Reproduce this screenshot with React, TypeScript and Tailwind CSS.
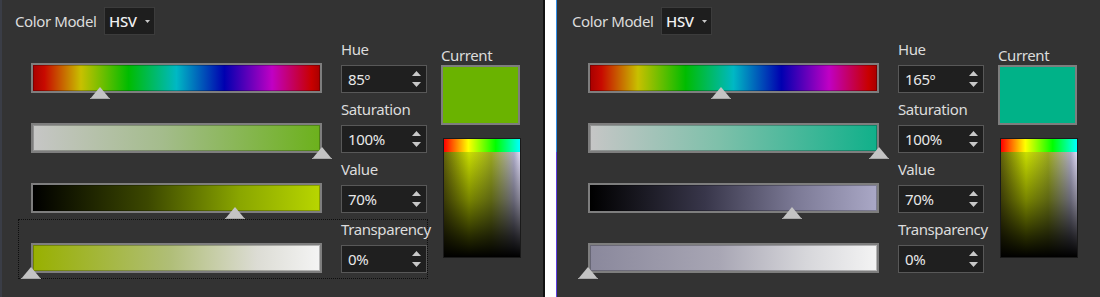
import React from 'react';

type PanelProps = {
  hue: number;
  sat: number;
  val: number;
  trans: number;
  swatch: string;
  satBar: string;
  valBar: string;
  transBar: string;
  edge: string;
  focused?: boolean;
};

const hueBar =
  'bg-[linear-gradient(to_right,#a80000,#c80a00_4%,#c8c000_16.7%,#00bc00_33.3%,#00b8c4_50%,#0000b0_66.7%,#c000c4_83.3%,#c80000_97%,#a80000)]';

const Thumb = ({ pct }: { pct: number }) => (
  <svg
    className="absolute top-[24px] -ml-[10px]"
    style={{ left: `${pct}%` }}
    width="20"
    height="12"
    viewBox="0 0 20 12"
  >
    <polygon points="10,0 20,12 0,12" fill="#c4c4c4" />
    <line x1="0" y1="11.5" x2="20" y2="11.5" stroke="#a8a8a8" strokeWidth="1" />
  </svg>
);

const Bar = ({ fill, pct }: { fill: string; pct: number }) => (
  <div className="relative w-[291px] h-[30px]">
    <div className={`h-full w-full border-2 border-[#7e7e7e] shadow-[inset_0_0_0_1px_rgba(0,0,0,0.25)] ${fill}`} />
    <Thumb pct={pct} />
  </div>
);

const Spin = ({ value }: { value: string }) => (
  <div className="mt-[5px] h-[28px] w-[86px] bg-[#1f1f1f] border border-[#585858] flex items-center justify-between pl-[6px] pr-[5px]">
    <span className="text-[15px] tracking-[-0.3px] text-[#e8e8e8]">{value}</span>
    <div className="flex flex-col gap-[6px]">
      <svg width="9" height="5" viewBox="0 0 9 5">
        <polygon points="4.5,0 9,5 0,5" fill="#c8c8c8" />
      </svg>
      <svg width="9" height="5" viewBox="0 0 9 5">
        <polygon points="0,0 9,0 4.5,5" fill="#c8c8c8" />
      </svg>
    </div>
  </div>
);

const Row = ({
  label,
  value,
  fill,
  pct,
  focused,
}: {
  label: string;
  value: string;
  fill: string;
  pct: number;
  focused?: boolean;
}) => (
  <div
    className={`flex h-[60px] pl-[12px] border ${
      focused ? 'border-dotted border-[#0e0e0e]' : 'border-transparent'
    }`}
  >
    <div className="pt-[23px]">
      <Bar fill={fill} pct={pct} />
    </div>
    <div className="ml-[19px] flex flex-col w-[86px]">
      <div className="h-[20px] leading-[18px] text-[15px] tracking-[-0.4px] text-[#dcdcdc] whitespace-nowrap">
        {label}
      </div>
      <Spin value={value} />
    </div>
  </div>
);

const Panel = (p: PanelProps) => (
  <div className={`h-[297px] w-[543px] shrink-0 bg-[#333333] border-l-2 ${p.edge} pt-[7px] flex flex-col`}>
    <div className="flex items-center h-[28px] pl-[13px]">
      <span className="w-[89px] text-[15px] tracking-[-0.4px] text-[#dcdcdc]">Color Model</span>
      <div className="h-[28px] w-[51px] bg-[#1e1e1e] border border-[#3c3c3c] flex items-center pl-[4px] gap-[8px]">
        <span className="text-[15px] tracking-[-0.3px] font-medium text-[#f0f0f0]">HSV</span>
        <svg width="5" height="3" viewBox="0 0 5 3">
          <polygon points="0,0 5,0 2.5,3" fill="#c8c8c8" />
        </svg>
      </div>
    </div>
    <div className="flex mt-[4px] pl-[16px]">
      <div className="flex flex-col w-[410px]">
        <Row label="Hue" value={`${p.hue}º`} fill={hueBar} pct={(p.hue / 360) * 100} />
        <Row label="Saturation" value={`${p.sat}%`} fill={p.satBar} pct={p.sat} />
        <Row label="Value" value={`${p.val}%`} fill={p.valBar} pct={p.val} />
        <Row
          label="Transparency"
          value={`${p.trans}%`}
          fill={p.transBar}
          pct={p.trans}
          focused={p.focused}
        />
      </div>
      <div className="ml-[13px] w-[80px] flex flex-col pt-[7px]">
        <div className="h-[19px] leading-[19px] text-[15px] tracking-[-0.4px] text-[#dcdcdc]">Current</div>
        <div className={`h-[60px] w-[79px] border-2 border-[#7e7e7e] ${p.swatch}`} />
        <div className="mt-[13px] ml-[2px] h-[120px] w-[78px] border border-[#1a1a1a] flex flex-col">
          <div className="h-[13px] bg-[linear-gradient(to_right,#ff0000,#ffff00_32%,#00ff00_68%,#00ffff)]" />
          <div className="flex-1 bg-[linear-gradient(to_right,#62620c,#cadf00_33%,#9caa20_62%,#aeacc8_92%,#e0dcf6)]">
            <div className="h-full w-full bg-[linear-gradient(to_bottom,rgba(0,0,0,0)_0%,rgba(0,0,0,0.4)_45%,rgba(0,0,0,0.8)_80%,#000)]" />
          </div>
        </div>
      </div>
    </div>
  </div>
);

export default function App() {
  return (
    <div className="flex w-[1100px] h-[297px] overflow-hidden font-['Noto_Sans',sans-serif]">
      <Panel
        hue={85}
        sat={100}
        val={70}
        trans={0}
        edge="border-[#3a3d46]"
        swatch="bg-[#6ab300]"
        satBar="bg-[linear-gradient(to_right,#c6c6c6,#a4bc8c_45%,#6cb11c)]"
        valBar="bg-[linear-gradient(to_right,#000000,#3c4800_40%,#8aa600_72%,#b8d600)]"
        transBar="bg-[linear-gradient(to_right,#98b000,#b0be78_48%,#dcdcd4_78%,#f4f4f4)]"
        focused
      />
      <div className="w-[2px] bg-[#111111]" />
      <div className="w-[11px] bg-white" />
      <div className="w-[1px] flex flex-col">
        <div className="h-[152px] bg-[#2f8de6]" />
        <div className="flex-1 bg-[#5c3ee0]" />
      </div>
      <Panel
        hue={165}
        sat={100}
        val={70}
        trans={0}
        edge="border-[#333333]"
        swatch="bg-[#00b288]"
        satBar="bg-[linear-gradient(to_right,#c6c6c6,#7ec0aa_45%,#10b08a)]"
        valBar="bg-[linear-gradient(to_right,#000000,#38364a_40%,#7c7a96_72%,#aaa8c6)]"
        transBar="bg-[linear-gradient(to_right,#8a889c,#a8a6b4_45%,#d6d6da_75%,#f4f4f4)]"
      />
    </div>
  );
}
